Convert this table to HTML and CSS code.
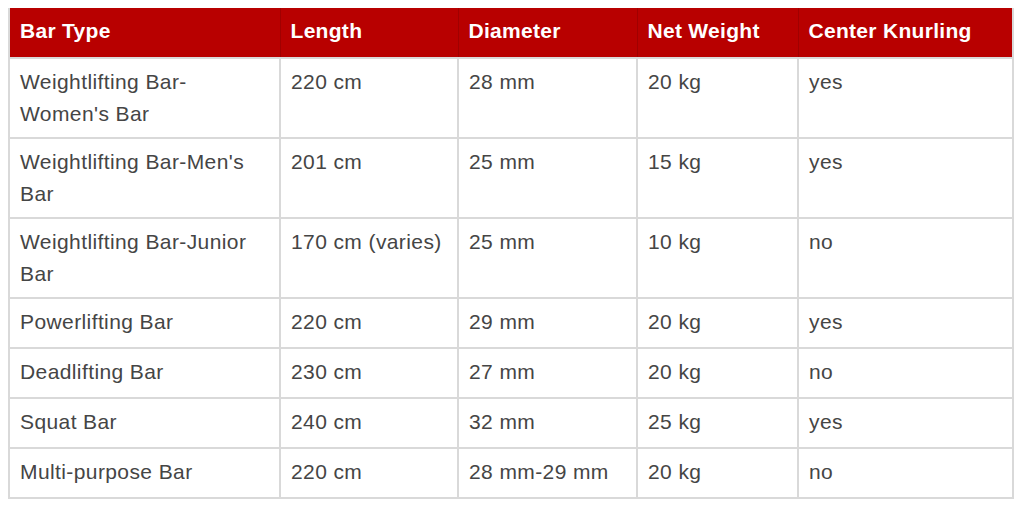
FILE: index.html
```html
<!DOCTYPE html>
<html lang="en">
<head>
<meta charset="utf-8">
<title>Bar Types</title>
<link rel="stylesheet" href="styles.css">
</head>
<body>
<table class="bars">
  <thead>
    <tr>
      <th class="c-type">Bar Type</th>
      <th class="c-len">Length</th>
      <th class="c-dia">Diameter</th>
      <th class="c-wt">Net Weight</th>
      <th class="c-kn">Center Knurling</th>
    </tr>
  </thead>
  <tbody>
    <tr><td>Weightlifting Bar-Women's Bar</td><td>220 cm</td><td>28 mm</td><td>20 kg</td><td>yes</td></tr>
    <tr><td>Weightlifting Bar-Men's Bar</td><td>201 cm</td><td>25 mm</td><td>15 kg</td><td>yes</td></tr>
    <tr><td>Weightlifting Bar-Junior Bar</td><td>170 cm (varies)</td><td>25 mm</td><td>10 kg</td><td>no</td></tr>
    <tr><td>Powerlifting Bar</td><td>220 cm</td><td>29 mm</td><td>20 kg</td><td>yes</td></tr>
    <tr><td>Deadlifting Bar</td><td>230 cm</td><td>27 mm</td><td>20 kg</td><td>no</td></tr>
    <tr><td>Squat Bar</td><td>240 cm</td><td>32 mm</td><td>25 kg</td><td>yes</td></tr>
    <tr><td>Multi-purpose Bar</td><td>220 cm</td><td>28 mm-29 mm</td><td>20 kg</td><td>no</td></tr>
  </tbody>
</table>
</body>
</html>
```
FILE: styles.css
```css
html, body {
  background: #ffffff;
}
body {
  margin: 8px;
  font-family: "Liberation Sans", Arial, sans-serif;
}
.bars {
  width: 1006px;
  border-collapse: collapse;
  table-layout: fixed;
  border: 2px solid #d9d9d9;
  border-top: 0;
}
.bars th,
.bars td {
  font-size: 21px;
  letter-spacing: 0.4px;
  line-height: 32px;
  text-align: left;
  vertical-align: top;
  padding: 7px 8px 7px 10px;
  box-sizing: border-box;
}
.bars thead tr {
  height: 50px;
}
.bars th {
  background: #b80000;
  color: #ffffff;
  font-weight: bold;
  letter-spacing: 0.3px;
  border-left: 1px solid #a00000;
  border-right: 1px solid #a00000;
  border-bottom: 0;
}
.bars th:first-child {
  border-left: 0;
}
.bars th:last-child {
  border-right: 1px solid #8e0000;
}
.bars tbody tr {
  height: 50px;
}
.bars td {
  color: #454545;
  border: 2px solid #d9d9d9;
}
.c-type { width: 271px; }
.c-len { width: 178px; }
.c-dia { width: 179px; }
.c-wt { width: 161px; }
.c-kn { width: auto; }
```
